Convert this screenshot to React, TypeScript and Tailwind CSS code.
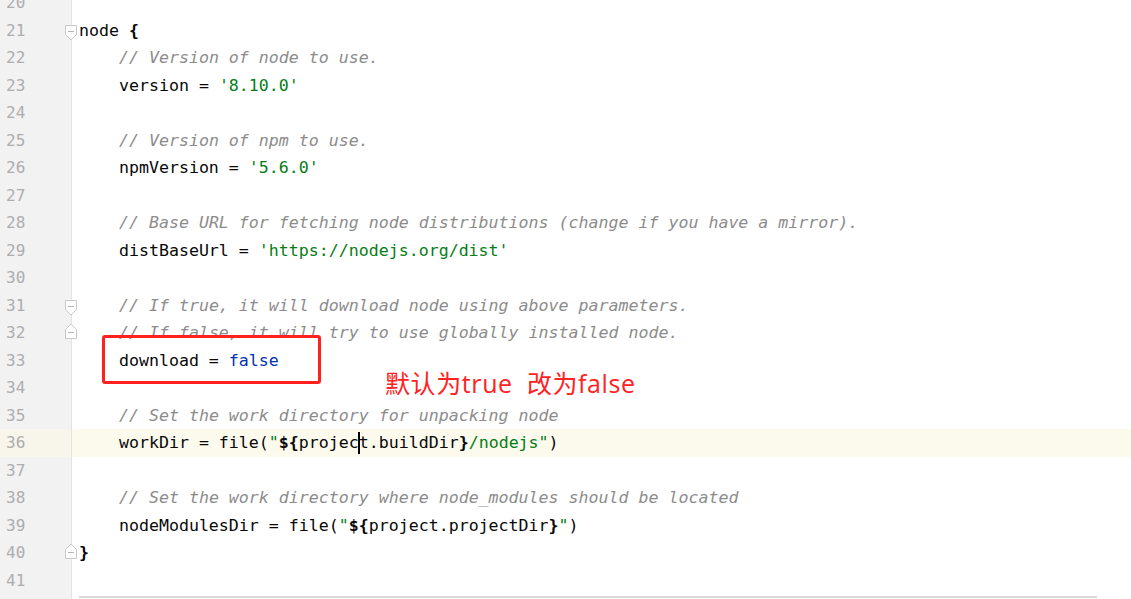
type Seg = { t: string; c?: "cm" | "str" | "kw" | "b" };

type Line = { n: number; segs: Seg[]; fold?: "start" | "end" };

const lines: Line[] = [
  { n: 20, segs: [] },
  { n: 21, fold: "start", segs: [{ t: "node " }, { t: "{", c: "b" }] },
  { n: 22, segs: [{ t: "    " }, { t: "// Version of node to use.", c: "cm" }] },
  { n: 23, segs: [{ t: "    version = " }, { t: "'8.10.0'", c: "str" }] },
  { n: 24, segs: [] },
  { n: 25, segs: [{ t: "    " }, { t: "// Version of npm to use.", c: "cm" }] },
  { n: 26, segs: [{ t: "    npmVersion = " }, { t: "'5.6.0'", c: "str" }] },
  { n: 27, segs: [] },
  { n: 28, segs: [{ t: "    " }, { t: "// Base URL for fetching node distributions (change if you have a mirror).", c: "cm" }] },
  { n: 29, segs: [{ t: "    distBaseUrl = " }, { t: "'https://nodejs.org/dist'", c: "str" }] },
  { n: 30, segs: [] },
  { n: 31, fold: "start", segs: [{ t: "    " }, { t: "// If true, it will download node using above parameters.", c: "cm" }] },
  { n: 32, fold: "end", segs: [{ t: "    " }, { t: "// If false, it will try to use globally installed node.", c: "cm" }] },
  { n: 33, segs: [{ t: "    download = " }, { t: "false", c: "kw" }] },
  { n: 34, segs: [] },
  { n: 35, segs: [{ t: "    " }, { t: "// Set the work directory for unpacking node", c: "cm" }] },
  {
    n: 36,
    segs: [
      { t: "    workDir = file(" },
      { t: '"', c: "str" },
      { t: "${", c: "b" },
      { t: "project.buildDir" },
      { t: "}", c: "b" },
      { t: '/nodejs"', c: "str" },
      { t: ")" },
    ],
  },
  { n: 37, segs: [] },
  { n: 38, segs: [{ t: "    " }, { t: "// Set the work directory where node_modules should be located", c: "cm" }] },
  {
    n: 39,
    segs: [
      { t: "    nodeModulesDir = file(" },
      { t: '"', c: "str" },
      { t: "${", c: "b" },
      { t: "project.projectDir" },
      { t: "}", c: "b" },
      { t: '"', c: "str" },
      { t: ")" },
    ],
  },
  { n: 40, fold: "end", segs: [{ t: "}", c: "b" }] },
  { n: 41, segs: [] },
];

const segClass = {
  cm: "italic text-[#8c8c8c]",
  str: "text-[#067d17]",
  kw: "text-[#0033b3]",
  b: "font-bold text-[#080808]",
};

function FoldMark({ kind }: { kind: "start" | "end" }) {
  // pentagon fold handle with a minus sign, sitting on the gutter edge
  if (kind === "start") {
    return (
      <svg width="12" height="16" viewBox="0 0 12 16" className="absolute left-[65px] top-[8px]">
        <path d="M0.5 0.5 H11.5 V9.5 L6 15 L0.5 9.5 Z" fill="#ffffff" stroke="#c8c8c8" strokeWidth="1" />
        <path d="M3 6.5 H9" stroke="#b4b4b4" strokeWidth="1" />
      </svg>
    );
  }
  return (
    <svg width="12" height="16" viewBox="0 0 12 16" className="absolute left-[65px] top-[4px]">
      <path d="M0.5 15.5 H11.5 V6.5 L6 1 L0.5 6.5 Z" fill="#ffffff" stroke="#c8c8c8" strokeWidth="1" />
      <path d="M3 9.5 H9" stroke="#b4b4b4" strokeWidth="1" />
    </svg>
  );
}

export default function App() {
  return (
    <div className="relative h-[599px] w-[1131px] overflow-hidden bg-white font-['DejaVu_Sans_Mono',monospace] text-[16.6px] text-[#080808]">
      <div className="mt-[-11px]">
        {lines.map((ln) => {
          const current = ln.n === 36;
          return (
            <div
              key={ln.n}
              className={`relative flex h-[27.5px] leading-[27.5px] ${current ? "bg-[#fcfaed]" : ""}`}
            >
              <div
                className={`w-[72px] shrink-0 border-r border-[#e3e3e3] pl-[6px] text-[16px] text-[#adadad] ${current ? "bg-[#f8f6ea]" : "bg-[#f2f2f2]"}`}
              >
                {ln.n}
              </div>
              <div className="whitespace-pre pl-[7px]">
                {ln.segs.map((s, i) => (
                  <span key={i} className={s.c ? segClass[s.c] : ""}>
                    {s.t}
                  </span>
                ))}
              </div>
              {ln.fold && <FoldMark kind={ln.fold} />}
              {current && <span className="absolute left-[358px] top-[3px] h-[22px] w-[2px] bg-black" />}
            </div>
          );
        })}
        <div className="flex h-[12px]">
          <div className="w-[72px] shrink-0 border-r border-[#e3e3e3] bg-[#f2f2f2]" />
          <div className="pl-[7px] pt-[2px]">
            <div className="h-[2px] w-[1018px] bg-[#dadada]" />
          </div>
        </div>
      </div>

      {/* annotation drawn over the screenshot */}
      <div className="absolute left-[102px] top-[335px] h-[49px] w-[219px] rounded-[3px] border-[3px] border-[#ff2020]" />
      <div className="absolute left-[385px] top-[366px] whitespace-pre font-['Open_Sans','Noto_Sans_CJK_SC',sans-serif] text-[25px] leading-[34px] tracking-[0.6px] text-[#ff2222]">
        默认为true  改为false
      </div>
    </div>
  );
}
